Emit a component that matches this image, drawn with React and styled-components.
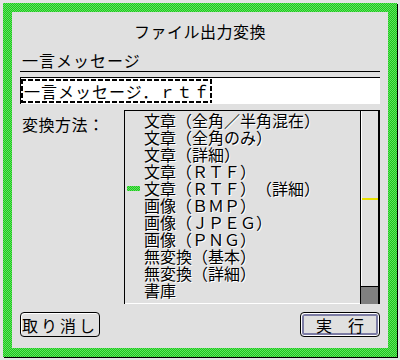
import React from 'react'
import styled, { createGlobalStyle } from 'styled-components'

const GlobalStyle = createGlobalStyle`
  html, body {
    margin: 0;
    padding: 0;
    background: #e0e0e0;
  }
  body {
    font-family: "Noto Sans CJK JP", "Noto Sans", sans-serif;
    color: #000;
    text-spacing-trim: space-all;
  }
`

const methods = [
  '文章（全角／半角混在）',
  '文章（全角のみ）',
  '文章（詳細）',
  '文章（ＲＴＦ）',
  '文章（ＲＴＦ）（詳細）',
  '画像（ＢＭＰ）',
  '画像（ＪＰＥＧ）',
  '画像（ＰＮＧ）',
  '無変換（基本）',
  '無変換（詳細）',
  '書庫',
]

const green = `repeating-conic-gradient(#1fc41f 0 25%, #5fe65f 0 50%) 0 0 / 2px 2px`

const App = () => {
  return (
    <>
      <GlobalStyle />
      <Window>
        <GreenFrame>
          <Panel>
            <Title>ファイル出力変換</Title>
            <FieldLabel>一言メッセージ</FieldLabel>
            <Rule />
            <TextBox>
              <Focus>一言メッセージ．ｒｔｆ</Focus>
            </TextBox>
            <MethodRow>
              <MethodLabel>変換方法：</MethodLabel>
              <ListBox>
                <Items>
                  {methods.map((m, i) => (
                    <Item key={m}>
                      <Marker $on={i === 4} />
                      {m}
                    </Item>
                  ))}
                </Items>
                <ScrollBar>
                  <Track>
                    <Thumb />
                  </Track>
                  <ScrollEnd />
                </ScrollBar>
              </ListBox>
            </MethodRow>
            <Buttons>
              <Button>取り消し</Button>
              <Button $default>実　行</Button>
            </Buttons>
          </Panel>
        </GreenFrame>
      </Window>
    </>
  )
}

export default App

const Window = styled.div`
  width: 400px;
  height: 360px;
  box-sizing: border-box;
  padding: 3px;
  background: #e4e4e4;
`
const GreenFrame = styled.div`
  width: 394px;
  height: 354px;
  box-sizing: border-box;
  padding: 9px;
  background: ${green};
  box-shadow: 1px 1px 0 #000;
`
const Panel = styled.div`
  width: 376px;
  height: 336px;
  background: #e0e0e0;
  box-sizing: border-box;
  padding: 0 8px;
  display: flex;
  flex-direction: column;
`
const Title = styled.div`
  height: 38px;
  line-height: 38px;
  text-align: center;
  font-size: 16px;
  letter-spacing: 0.5px;
`
const FieldLabel = styled.div`
  height: 21px;
  line-height: 21px;
  padding-left: 2px;
  font-size: 16px;
  letter-spacing: 1px;
`
const Rule = styled.div`
  height: 1px;
  background: #000;
  margin-bottom: 5px;
`
const TextBox = styled.div`
  height: 27px;
  box-sizing: border-box;
  background: #fff;
  border-top: 1px solid #000;
  border-left: 1px solid #000;
  padding: 1px 0 0 0;
  display: flex;
  align-items: flex-start;
`
const Focus = styled.span`
  height: 24px;
  line-height: 24px;
  padding: 0 2px 0 3px;
  font-size: 16px;
  letter-spacing: 1px;
  background:
    repeating-linear-gradient(90deg, #000 0 5px, transparent 5px 7px) top / 100% 2px no-repeat,
    repeating-linear-gradient(90deg, #000 0 5px, transparent 5px 7px) bottom / 100% 2px no-repeat,
    repeating-linear-gradient(180deg, #000 0 5px, transparent 5px 7px) left / 2px 100% no-repeat,
    repeating-linear-gradient(180deg, #000 0 5px, transparent 5px 7px) right / 2px 100% no-repeat;
`
const MethodRow = styled.div`
  margin-top: 6px;
  display: grid;
  grid-template-columns: 104px 1fr;
  height: 194px;
`
const MethodLabel = styled.div`
  padding: 5px 0 0 2px;
  line-height: 18px;
  font-size: 16px;
  letter-spacing: 0.5px;
`
const ListBox = styled.div`
  display: flex;
  border-top: 1px solid #000;
  border-left: 1px solid #000;
`
const Items = styled.div`
  flex: 1;
  padding-top: 1px;
  border-bottom: 1px solid #fff;
`
const Item = styled.div`
  display: flex;
  align-items: center;
  height: 17px;
  font-size: 16px;
  line-height: 17px;
  white-space: nowrap;
  text-shadow: 1px 1px 0 #fff;
`
const Marker = styled.span`
  width: 13px;
  height: 5px;
  margin: 0 4px 0 2px;
  background: ${p => (p.$on ? green : 'transparent')};
`
const ScrollBar = styled.div`
  width: 20px;
  box-sizing: border-box;
  display: flex;
  flex-direction: column;
  border-left: 1px solid #000;
  border-right: 2px solid #000;
  box-shadow: inset 1px 0 0 #fff;
`
const Track = styled.div`
  flex: 1;
`
const Thumb = styled.div`
  margin-top: 87px;
  height: 2px;
  margin-left: 1px;
  background: #e8e000;
`
const ScrollEnd = styled.div`
  height: 17px;
  background: #808080;
  border-top: 1px solid #000;
`
const Buttons = styled.div`
  margin-top: 8px;
  display: flex;
  justify-content: space-between;
`
const Button = styled.button`
  width: 80px;
  height: 25px;
  padding: 0;
  font-family: inherit;
  font-size: 16px;
  letter-spacing: ${p => (p.$default ? '0' : '3px')};
  color: #000;
  background: #e0e0e0;
  border: 1px solid #000;
  border-radius: 4px;
  box-shadow: ${p =>
    p.$default
      ? 'inset 1px 1px 0 #fff, inset 0 0 0 1px #fff, inset 0 0 0 3px #7c7ca4'
      : 'inset 1px 1px 0 #fff'};
  line-height: 22px;
`
